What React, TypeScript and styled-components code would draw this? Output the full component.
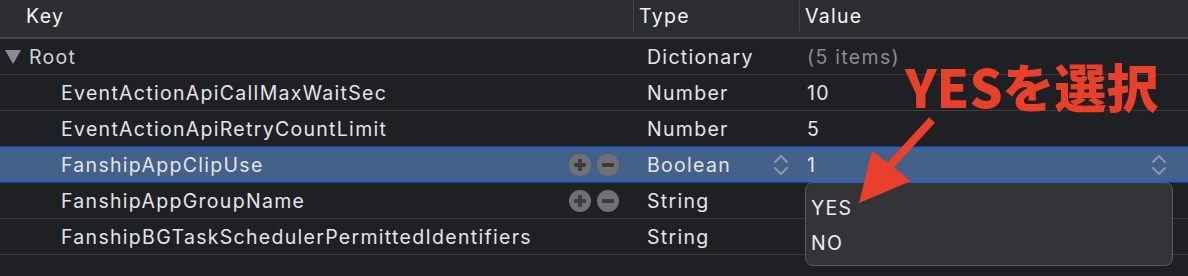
import React from 'react';
import styled, { createGlobalStyle } from 'styled-components';

const GlobalStyle = createGlobalStyle`
  html, body {
    margin: 0;
    padding: 0;
    background: #1f2024;
  }
  body {
    font-family: 'Inter', 'Liberation Sans', sans-serif;
  }
`;

// 전체 테이블
const Editor = styled.div`
  position: relative;
  width: 1188px;
  height: 276px;
  overflow: hidden;
  background: #1f2024;
  font-size: 19.5px;
  letter-spacing: 1.3px;
`;

const Columns = `
  display: grid;
  grid-template-columns: 633px 166px 1fr;
`;

// 헤더
const Header = styled.div`
  ${Columns}
  height: 37px;
  background: #2b2d31;
  border-bottom: 2px solid #46484c;
`;

const HeaderCell = styled.div<{ $divider?: boolean; $pad: number }>`
  display: flex;
  align-items: center;
  height: 31px;
  padding-left: ${p => p.$pad}px;
  border-left: ${p => (p.$divider ? '1px solid #45474b' : 'none')};
  color: #f4f4f4;
`;

// 행
const Row = styled.div<{ $selected?: boolean }>`
  ${Columns}
  height: 35px;
  align-items: center;
  border-bottom: 1px solid #3a3b3f;
  background: ${p => (p.$selected ? '#44618a' : 'transparent')};
  box-shadow: ${p => (p.$selected ? 'inset 0 2px 0 #1f5fd9, inset 0 -2px 0 #1f5fd9' : 'none')};
  color: #e4e4e6;
`;

const KeyCell = styled.div<{ $indent: number }>`
  display: flex;
  align-items: center;
  padding-left: ${p => p.$indent}px;
  padding-right: 14px;
  height: 100%;
`;

const KeyText = styled.span<{ $dim?: boolean }>`
  flex: 1;
  white-space: nowrap;
  color: ${p => (p.$dim ? '#d2d2d4' : 'inherit')};
`;

const Disclosure = styled.span`
  width: 0;
  height: 0;
  border-left: 8px solid transparent;
  border-right: 8px solid transparent;
  border-top: 14px solid #8d8d90;
  margin-right: 8px;
`;

const RowButtons = styled.div`
  display: flex;
  gap: 6px;
`;

const TypeCell = styled.div`
  display: flex;
  align-items: center;
  justify-content: space-between;
  padding: 0 10px 0 14px;
  height: 100%;
`;

const ValueCell = styled.div<{ $muted?: boolean }>`
  display: flex;
  align-items: center;
  justify-content: space-between;
  padding: 0 21px 0 8px;
  height: 100%;
  color: ${p => (p.$muted ? '#8b8b8f' : '#e4e4e6')};
`;

// 드롭다운 메뉴
const Popup = styled.div`
  position: absolute;
  left: 805px;
  top: 182px;
  width: 368px;
  height: 84px;
  box-sizing: border-box;
  background: #343438;
  border: 1px solid #5c5c60;
  border-radius: 8px;
  padding-top: 7px;
  display: flex;
  flex-direction: column;
`;

const PopupItem = styled.div`
  height: 35px;
  display: flex;
  align-items: center;
  padding-left: 5px;
  color: #ececee;
`;

// 주석 (빨간 글씨 + 화살표)
const Callout = styled.div`
  position: absolute;
  left: 905px;
  top: 58px;
  color: #e8402a;
  font-family: 'Noto Sans CJK JP', 'Liberation Sans', sans-serif;
  font-weight: 900;
  font-size: 52px;
  line-height: 56px;
  letter-spacing: 0;
  white-space: nowrap;
`;

const ArrowLayer = styled.svg`
  position: absolute;
  left: 0;
  top: 0;
  pointer-events: none;
`;

function CircleButton({ minus }: { minus?: boolean }) {
  return (
    <svg width="22" height="22" viewBox="0 0 22 22">
      <circle cx="11" cy="11" r="11" fill="#717175" />
      <rect x="5" y="9" width="12" height="4" rx="1" fill="#3b3c40" />
      {!minus && <rect x="9" y="5" width="4" height="12" rx="1" fill="#3b3c40" />}
    </svg>
  );
}

function Stepper() {
  return (
    <svg width="16" height="22" viewBox="0 0 16 22">
      <path d="M2 8 L8 2 L14 8" fill="none" stroke="#8e97a6" strokeWidth="2" strokeLinecap="round" strokeLinejoin="round" />
      <path d="M2 14 L8 20 L14 14" fill="none" stroke="#8e97a6" strokeWidth="2" strokeLinecap="round" strokeLinejoin="round" />
    </svg>
  );
}

type Item = {
  key: string;
  type: string;
  value: string;
  buttons?: boolean;
  selected?: boolean;
};

const items: Item[] = [
  { key: 'EventActionApiCallMaxWaitSec', type: 'Number', value: '10' },
  { key: 'EventActionApiRetryCountLimit', type: 'Number', value: '5' },
  { key: 'FanshipAppClipUse', type: 'Boolean', value: '1', buttons: true, selected: true },
  { key: 'FanshipAppGroupName', type: 'String', value: '', buttons: true },
  { key: 'FanshipBGTaskSchedulerPermittedIdentifiers', type: 'String', value: '' },
];

function App() {
  return (
    <Editor>
      <GlobalStyle />
      <Header>
        <HeaderCell $pad={26}>Key</HeaderCell>
        <HeaderCell $pad={5} $divider>Type</HeaderCell>
        <HeaderCell $pad={5} $divider>Value</HeaderCell>
      </Header>

      <Row>
        <KeyCell $indent={5}>
          <Disclosure />
          <KeyText $dim>Root</KeyText>
        </KeyCell>
        <TypeCell>Dictionary</TypeCell>
        <ValueCell $muted>(5 items)</ValueCell>
      </Row>

      {items.map(item => (
        <Row key={item.key} $selected={item.selected}>
          <KeyCell $indent={61}>
            <KeyText>{item.key}</KeyText>
            {item.buttons && (
              <RowButtons>
                <CircleButton />
                <CircleButton minus />
              </RowButtons>
            )}
          </KeyCell>
          <TypeCell>
            <span>{item.type}</span>
            {item.selected && <Stepper />}
          </TypeCell>
          <ValueCell>
            <span>{item.value}</span>
            {item.selected && <Stepper />}
          </ValueCell>
        </Row>
      ))}

      <Popup>
        <PopupItem>YES</PopupItem>
        <PopupItem>NO</PopupItem>
      </Popup>

      <Callout>YESを選択</Callout>
      <ArrowLayer width="1188" height="276">
        <line x1="932" y1="120" x2="888" y2="168" stroke="#e8402a" strokeWidth="8" />
        <polygon points="872,151 911,181 859,203" fill="#e8402a" />
      </ArrowLayer>
    </Editor>
  );
}

export default App;
